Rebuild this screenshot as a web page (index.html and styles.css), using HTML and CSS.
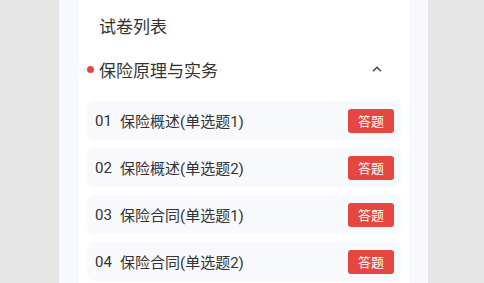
FILE: index.html
```html
<!DOCTYPE html>
<html lang="zh">
<head>
    <meta charset="UTF-8">
    <meta name="viewport" content="width=device-width, initial-scale=1.0">
    <title>试卷列表</title>
    <link rel="stylesheet" href="styles.css">
</head>
<body>
    <div class="paper-page">
        <div class="paper-card">
            <h2 class="paper-title">试卷列表</h2>

            <div class="paper-section-head">
                <span class="paper-dot"></span>
                <span class="paper-section-name">保险原理与实务</span>
                <svg class="paper-arrow" width="10" height="6" viewBox="0 0 10 6">
                    <path d="M1 5.3 L5 1.2 L9 5.3" fill="none" stroke="#444" stroke-width="1.4"/>
                </svg>
            </div>

            <ul class="paper-list">
                <li class="paper-item">
                    <span class="paper-num">01</span>
                    <span class="paper-name">保险概述(单选题1)</span>
                    <button class="paper-button">答题</button>
                </li>
                <li class="paper-item">
                    <span class="paper-num">02</span>
                    <span class="paper-name">保险概述(单选题2)</span>
                    <button class="paper-button">答题</button>
                </li>
                <li class="paper-item">
                    <span class="paper-num">03</span>
                    <span class="paper-name">保险合同(单选题1)</span>
                    <button class="paper-button">答题</button>
                </li>
                <li class="paper-item">
                    <span class="paper-num">04</span>
                    <span class="paper-name">保险合同(单选题2)</span>
                    <button class="paper-button">答题</button>
                </li>
            </ul>
        </div>
    </div>
</body>
</html>
```

FILE: styles.css
```css
body {
    font-family: 'Roboto', 'Noto Sans CJK SC', sans-serif;
    background-color: #e5e5e5;
    margin: 0;
    overflow: hidden;
}

.paper-page {
    margin-left: 59px;
    width: 369px;
    min-height: 283px;
    background-color: #f7f9fe;
    padding: 0 19px 0 20px;
    box-sizing: border-box;
}

.paper-card {
    background-color: #fff;
    padding: 0 8px 20px 8px;
    min-height: 300px;
}

.paper-title {
    margin: 0;
    padding-left: 12px;
    font-size: 17px;
    font-weight: normal;
    line-height: 54px;
    color: #333;
}

.paper-section-head {
    display: flex;
    align-items: center;
    height: 30px;
    margin-bottom: 17px;
}

.paper-dot {
    width: 7px;
    height: 7px;
    border-radius: 50%;
    background-color: #e8453c;
    margin-right: 5px;
}

.paper-section-name {
    flex: 1;
    font-size: 17px;
    color: #333;
}

.paper-arrow {
    margin-right: 19px;
}

.paper-list {
    list-style: none;
    margin: 0;
    padding: 0;
    display: flex;
    flex-direction: column;
    gap: 8px;
}

.paper-item {
    display: flex;
    align-items: center;
    height: 39px;
    padding: 0 7px 0 8px;
    background-color: #f8f9fd;
    border-radius: 8px;
}

.paper-num {
    width: 25px;
    font-size: 15px;
    color: #333;
}

.paper-name {
    flex: 1;
    font-size: 15px;
    color: #333;
}

.paper-button {
    width: 46px;
    height: 24px;
    padding: 0;
    border: none;
    border-radius: 3px;
    background-color: #e5463f;
    color: #fff;
    font-family: inherit;
    font-size: 13px;
    cursor: pointer;
}
```
